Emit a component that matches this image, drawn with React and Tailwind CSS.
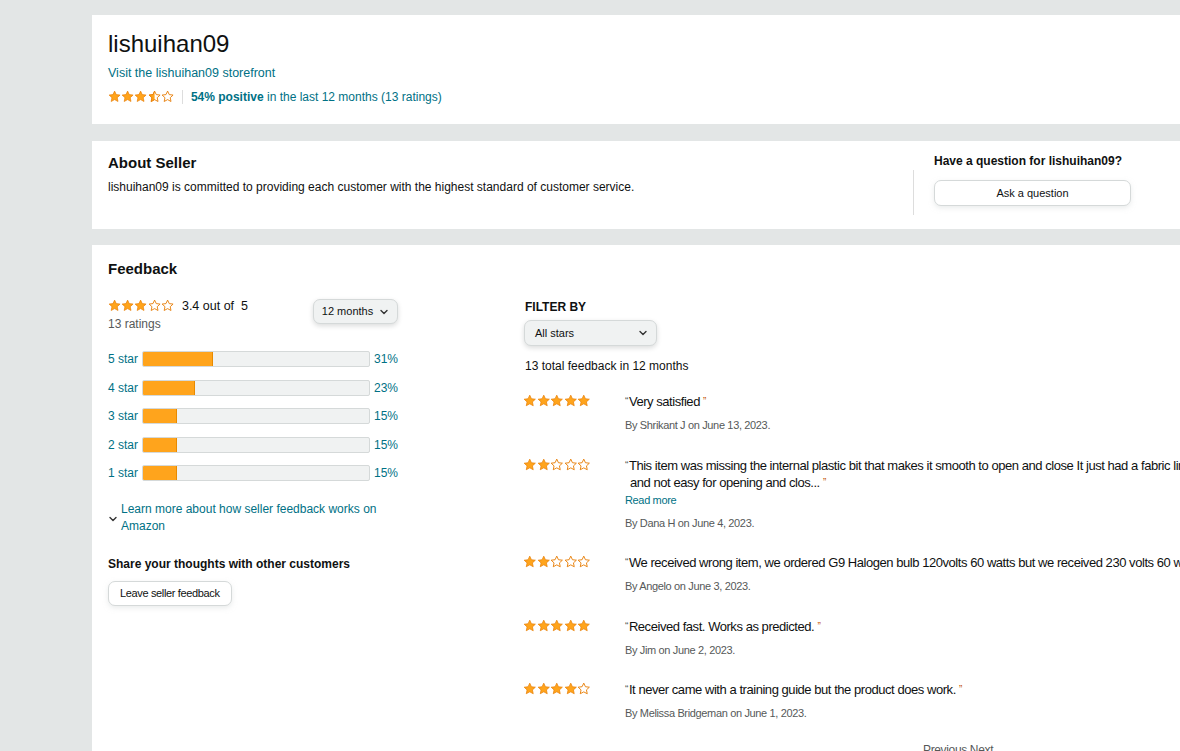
import React from "react";

const font = { fontFamily: '"Liberation Sans", Arial, sans-serif' };
const narrow = { fontFamily: '"Liberation Sans", Arial, sans-serif', letterSpacing: "-0.45px" };
const narrowSm = { fontFamily: '"Liberation Sans", Arial, sans-serif', letterSpacing: "-0.35px" };

const StarIcon = ({ type, size = 13 }) => {
  const d = "M12 2l3 6.4 7 .8-5.2 4.8 1.4 6.9L12 17.5l-6.2 3.4 1.4-6.9L2 9.2l7-.8z";
  return (
    <svg width={size} height={size} viewBox="0 0 24 24">
      <defs>
        <clipPath id="halfclip">
          <rect x="0" y="0" width="12" height="24" />
        </clipPath>
      </defs>
      {type === "full" && <path d={d} fill="#ffa41c" stroke="#e67a00" strokeWidth="1.2" strokeLinejoin="round" />}
      {type === "half" && (
        <>
          <path d={d} fill="none" stroke="#e67a00" strokeWidth="1.6" strokeLinejoin="round" />
          <path d={d} fill="#ffa41c" stroke="#e67a00" strokeWidth="1.2" clipPath="url(#halfclip)" />
        </>
      )}
      {type === "empty" && <path d={d} fill="none" stroke="#e67a00" strokeWidth="1.6" strokeLinejoin="round" />}
    </svg>
  );
};

const Stars = ({ value, size = 13 }) => {
  const out = [];
  for (let i = 1; i <= 5; i++) {
    let t = "empty";
    if (value >= i) t = "full";
    else if (value >= i - 0.5) t = "half";
    out.push(<StarIcon key={i} type={t} size={size} />);
  }
  return <div className="flex items-center">{out}</div>;
};

const Chevron = ({ className }) => (
  <svg className={className} width="10" height="10" viewBox="0 0 10 10" fill="none">
    <path d="M2 3.5l3 3 3-3" stroke="#333" strokeWidth="1.4" strokeLinecap="round" strokeLinejoin="round" />
  </svg>
);

const bars = [
  { label: "5 star", pct: 31 },
  { label: "4 star", pct: 23 },
  { label: "3 star", pct: 15 },
  { label: "2 star", pct: 15 },
  { label: "1 star", pct: 15 },
];

const reviews = [
  { stars: 5, text: "Very satisfied", by: "By Shrikant J on June 13, 2023." },
  {
    stars: 2,
    text: "This item was missing the internal plastic bit that makes it smooth to open and close It just had a fabric lining inside so it was floppy",
    line2: "and not easy for opening and clos...",
    more: true,
    by: "By Dana H on June 4, 2023.",
  },
  { stars: 2, text: "We received wrong item, we ordered G9 Halogen bulb 120volts 60 watts but we received 230 volts 60 watts bulbs", by: "By Angelo on June 3, 2023." },
  { stars: 5, text: "Received fast. Works as predicted.", by: "By Jim on June 2, 2023." },
  { stars: 4, text: "It never came with a training guide but the product does work.", by: "By Melissa Bridgeman on June 1, 2023." },
];

const Open = () => <span className="text-[#565959] text-[10px] align-top mr-[1px]">&#8220;</span>;
const Close = () => <span className="text-[#c45500] text-[10px] align-top">&#8221;</span>;

export default function App() {
  return (
    <div className="w-[1180px] h-[751px] overflow-hidden bg-[#e3e6e6] text-[#0f1111]" style={font}>
      <div className="pl-[92px] pt-[15px] flex flex-col">
        {/* header */}
        <div className="bg-white h-[109px] pl-4 pt-[15px]">
          <h1 className="text-[24px] leading-[28px] text-[#0f1111]">lishuihan09</h1>
          <a className="block mt-[7px] text-[12.5px] leading-[16px] text-[#007185]">Visit the lishuihan09 storefront</a>
          <div className="flex items-center mt-[8px] text-[12px] leading-[16px]">
            <Stars value={3.5} size={13.2} />
            <span className="w-px h-[14px] bg-[#ddd] mx-[8px]" />
            <span className="text-[#007185]">
              <b>54% positive</b> in the last 12 months (13 ratings)
            </span>
          </div>
        </div>

        {/* about */}
        <div className="bg-white h-[88px] flex mt-[17px]">
          <div className="flex-1 pl-4 pt-[12px]">
            <h2 className="text-[15px] leading-[20px] font-bold">About Seller</h2>
            <p className="text-[12px] leading-[16px] mt-[6px]">
              lishuihan09 is committed to providing each customer with the highest standard of customer service.
            </p>
          </div>
          <div className="w-[267px] flex pt-[12px]">
            <div className="w-px bg-[#ddd] h-[45px] mt-[17px]" />
            <div className="pl-[20px]">
              <div className="text-[12px] leading-[16px] font-bold">Have a question for lishuihan09?</div>
              <button className="mt-[11px] w-[197px] h-[26px] rounded-[7px] border border-[#d5d9d9] bg-white shadow-[0_2px_5px_rgba(213,217,217,0.5)] text-[11px] text-[#0f1111]">
                Ask a question
              </button>
            </div>
          </div>
        </div>

        {/* feedback */}
        <div className="bg-white h-[520px] pl-4 pt-[14px] mt-[16px]">
          <h2 className="text-[15px] leading-[20px] font-bold">Feedback</h2>
          <div className="flex mt-[19px]">
            {/* left */}
            <div className="w-[292px]">
              <div className="flex justify-between items-start">
                <div>
                  <div className="flex items-center text-[12.5px] leading-[16px]">
                    <Stars value={3} size={13.2} />
                    <span className="ml-[8px]">3.4 out of&nbsp; 5</span>
                  </div>
                  <div className="text-[12px] leading-[16px] text-[#565959] mt-[2px]">13 ratings</div>
                </div>
                <button className="mt-[1px] mr-[2px] w-[85px] h-[25px] rounded-[7px] border border-[#d5d9d9] bg-[#f0f2f2] shadow-[0_2px_5px_rgba(15,17,17,0.15)] text-[11px] flex items-center justify-center gap-[6px]">
                  12 months <Chevron />
                </button>
              </div>
              <div className="mt-[19px] flex flex-col gap-[12.5px]">
                {bars.map((b) => (
                  <div key={b.label} className="flex items-center h-[16px] text-[12px] text-[#007185]">
                    <span className="w-[34px]">{b.label}</span>
                    <div className="w-[228px] h-[16px] rounded-[2px] border border-[#d5d9d9] bg-[#f0f2f2] overflow-hidden">
                      <div className="h-full bg-[#ffa41c] border-r border-[#e88a00]" style={{ width: `${b.pct}%` }} />
                    </div>
                    <span className="ml-[4px]">{b.pct}%</span>
                  </div>
                ))}
              </div>
              <div className="flex items-center mt-[20px]">
                <Chevron className="mr-[3px] mt-[1px]" />
                <div className="text-[12px] leading-[17px] text-[#007185]">
                  Learn more about how seller feedback works on
                  <br />
                  Amazon
                </div>
              </div>
              <div className="text-[12px] leading-[16px] font-bold mt-[21px]">Share your thoughts with other customers</div>
              <button
                className="mt-[9px] h-[25px] px-[11px] rounded-[7px] border border-[#d5d9d9] bg-white shadow-[0_2px_5px_rgba(213,217,217,0.5)] text-[11px]"
                style={narrowSm}
              >
                Leave seller feedback
              </button>
            </div>

            {/* right */}
            <div className="ml-[125px] flex-1 min-w-0 pt-[1px]">
              <div className="text-[12px] leading-[16px] font-bold">FILTER BY</div>
              <button className="mt-[5px] -ml-px w-[133px] h-[26px] rounded-[7px] border border-[#d5d9d9] bg-[#f0f2f2] shadow-[0_2px_5px_rgba(15,17,17,0.15)] text-[11px] flex items-center justify-between pl-[10px] pr-[8px]">
                All stars <Chevron />
              </button>
              <div className="text-[12px] leading-[16px] mt-[12px]">13 total feedback in 12 months</div>
              <div className="mt-[19px] flex flex-col gap-[24.5px]">
                {reviews.map((r, i) => (
                  <div key={i} className="flex">
                    <div className="w-[100px] pt-[1px] -ml-[2px] mr-[2px] shrink-0">
                      <Stars value={r.stars} size={13.5} />
                    </div>
                    <div className="min-w-0 whitespace-nowrap">
                      <div className="text-[13px] leading-[17px] text-[#0f1111]" style={narrow}>
                        <Open />
                        {r.text}
                        {!r.line2 && <> <Close /></>}
                      </div>
                      {r.line2 && (
                        <div className="text-[13px] leading-[17px] pl-[5px]" style={narrow}>
                          {r.line2} <Close />
                        </div>
                      )}
                      {r.more && (
                        <div className="text-[11px] leading-[14px] text-[#007185] mt-[2px]" style={narrowSm}>
                          Read more
                        </div>
                      )}
                      <div className={`text-[11px] leading-[14px] text-[#565959] ${r.more ? "mt-[9px]" : "mt-[8px]"}`} style={narrowSm}>
                        {r.by}
                      </div>
                    </div>
                  </div>
                ))}
              </div>
              <div className="mt-[22px] ml-[398px] text-[12px] leading-[16px] text-[#565959]" style={narrowSm}>
                Previous Next
              </div>
            </div>
          </div>
        </div>
      </div>
    </div>
  );
}
